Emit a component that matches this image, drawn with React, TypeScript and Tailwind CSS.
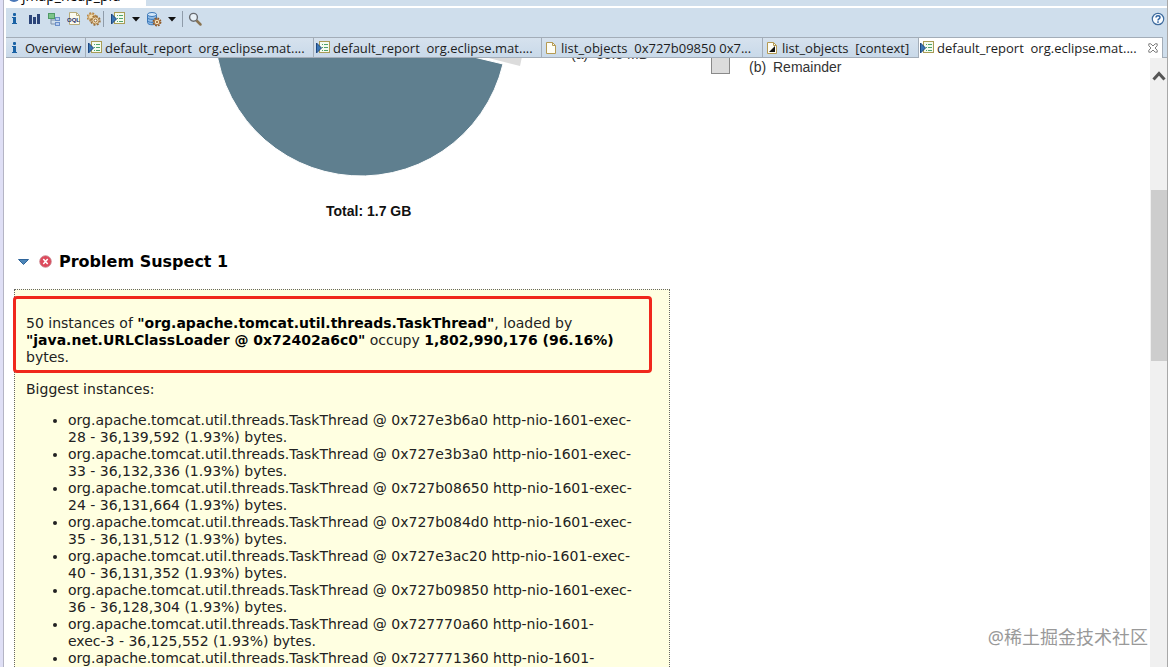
import type { ReactNode } from "react";

function InfoIcon() {
  return (
    <svg width="16" height="16" viewBox="0 0 16 16" fill="#1a62a5">
      <rect x="6" y="2" width="3" height="3" rx="1" />
      <path d="M5 6h4v6h1v1H5v-1h1V7H5z" />
    </svg>
  );
}

function HistogramIcon() {
  return (
    <svg width="16" height="16" viewBox="0 0 16 16" fill="#2b4478">
      <rect x="2" y="4" width="3" height="9" />
      <rect x="6" y="6" width="3" height="7" />
      <rect x="10" y="3" width="3" height="10" />
    </svg>
  );
}

function TreeIcon() {
  return (
    <svg width="16" height="16" viewBox="0 0 16 16">
      <path d="M4 7v6h5M4 9h5" fill="none" stroke="#7d8fa8" />
      <rect x="1.500" y="2.500" width="6" height="5" fill="#7cc48a" stroke="#4f9a66" />
      <rect x="8.500" y="6.500" width="4" height="3" fill="#b8cdf0" stroke="#6a8fc9" />
      <rect x="8.500" y="11.500" width="4" height="3" fill="#b8cdf0" stroke="#6a8fc9" />
    </svg>
  );
}

function OqlIcon() {
  return (
    <svg width="16" height="16" viewBox="0 0 16 16">
      <path d="M2.500 1.500h7l3 3v9h-10z" fill="#fbfaf0" stroke="#b8ac7c" />
      <path d="M9.500 1.500v3h3" fill="none" stroke="#b8ac7c" />
      <text x="0" y="11" fontSize="6" fontWeight="700" fontFamily="Liberation Sans, sans-serif" fill="#27306b">
        OQL
      </text>
    </svg>
  );
}

function GearsIcon() {
  return (
    <svg width="16" height="16" viewBox="2 0 16 16" fill="none">
      <circle cx="6.500" cy="6" r="4" stroke="#b9853f" strokeWidth="1.500" strokeDasharray="2 1.200" />
      <circle cx="6.500" cy="6" r="3" fill="#f2dcae" stroke="#c99a5a" />
      <circle cx="10.500" cy="9.500" r="4.500" stroke="#97703c" strokeWidth="1.500" strokeDasharray="2 1.500" />
      <circle cx="10.500" cy="9.500" r="3.500" fill="#f4e3bd" stroke="#b08045" />
      <circle cx="10.500" cy="9.500" r="1.500" fill="#fff" stroke="#8f6128" />
    </svg>
  );
}

function ReportIcon() {
  return (
    <svg width="16" height="16" viewBox="0 0 16 16">
      <rect x="4.500" y="1.500" width="10" height="11" fill="#f4fbef" stroke="#a99c55" />
      <path d="M7 4.500h1M9 4.500h4M7 7.500h1M9 7.500h4M7 10.500h1M9 10.500h4" stroke="#4ea36c" />
      <path d="M1.500 3l5 5-5 5z" fill="#3a76b4" stroke="#1c4680" />
    </svg>
  );
}

function DatabaseIcon() {
  return (
    <svg width="16" height="16" viewBox="0 0 16 16">
      <path d="M1.500 3.500v8c0 3 9 3 9 0v-8z" fill="#8fbce8" stroke="#3c78b8" />
      <ellipse cx="6" cy="3.500" rx="4.500" ry="2" fill="#d3e7fa" stroke="#3c78b8" />
      <path d="M1.500 6.500c0 2.500 9 2.500 9 0M1.500 9.500c0 2.500 9 2.500 9 0" fill="none" stroke="#3c78b8" />
      <circle cx="11" cy="11" r="3.700" fill="none" stroke="#8f5a28" strokeWidth="1.500" strokeDasharray="1.800 1.100" />
      <circle cx="11" cy="11" r="2.800" fill="#f4e3bd" stroke="#a86a34" />
      <circle cx="11" cy="11" r="1" fill="#8f5a28" />
    </svg>
  );
}

function SearchIcon() {
  return (
    <svg width="16" height="16" viewBox="0 0 16 16">
      <path d="M9.500 9.500l4 4" stroke="#8a7350" strokeWidth="2.500" strokeLinecap="round" />
      <circle cx="6.500" cy="6.300" r="3.900" fill="#e8f1f8" stroke="#686b70" strokeWidth="1.400" />
    </svg>
  );
}

function PageIcon({ marked = false }: { marked?: boolean }) {
  return (
    <svg width="16" height="16" viewBox="0 0 16 16">
      <path d="M3.500 2.500h6l3 3v8h-9z" fill="#fefdf4" stroke="#b59a52" />
      <path d="M9.500 2.500v3h3" fill="none" stroke="#b59a52" />
      {marked && <path d="M5 12l6-6v6z" fill="#111" />}
    </svg>
  );
}

function HelpIcon() {
  return (
    <svg width="14" height="14" viewBox="0 0 14 14">
      <circle cx="7" cy="7" r="5.700" fill="#f8fbfe" stroke="#3f6c9e" strokeWidth="1.200" />
      <path d="M5 5.600c0-2.600 4-2.400 4-.2 0 1.500-2 1.400-2 3" fill="none" stroke="#2e62a0" strokeWidth="1.500" />
      <rect x="6.200" y="9.300" width="1.600" height="1.500" fill="#2e62a0" />
    </svg>
  );
}

function CloseIcon() {
  return (
    <svg width="10" height="10" viewBox="0 0 10 10">
      <path
        d="M.8.8h2L5 3 7.200.8h2v2L7 5l2.200 2.200v2h-2L5 7 2.800 9.200h-2v-2L3 5 .8 2.800z"
        fill="#fff"
        stroke="#6f6f6f"
        strokeWidth="0.900"
      />
    </svg>
  );
}

function ErrorIcon() {
  return (
    <svg width="13" height="13" viewBox="0 0 13 13">
      <circle cx="6.500" cy="6.500" r="5.800" fill="#dd4a5c" stroke="#c8808a" strokeWidth="0.800" />
      <path d="M4.300 4l4.400 5M8.700 4l-4.400 5" stroke="#fff" strokeWidth="1.500" />
    </svg>
  );
}

function ToolButton({ label, children }: { label: string; children: ReactNode }) {
  return (
    <button type="button" aria-label={label} className="flex h-5 w-4 items-center justify-center">
      {children}
    </button>
  );
}

function MenuButton({ label }: { label: string }) {
  return (
    <button type="button" aria-label={label} className="mx-0.5 flex h-5 w-2 items-center justify-center">
      <svg width="8" height="5" viewBox="0 0 8 5">
        <path d="M0 0h8L4 4.500z" fill="#111" />
      </svg>
    </button>
  );
}

function Toolbar() {
  return (
    <div className="flex h-[31px] items-start border-t-2 border-white bg-[#cfdeec] pt-px pr-0.5 pl-px">
      <div className="flex items-center gap-1">
        <ToolButton label="Overview"><InfoIcon /></ToolButton>
        <ToolButton label="Histogram"><HistogramIcon /></ToolButton>
        <ToolButton label="Dominator tree"><TreeIcon /></ToolButton>
        <ToolButton label="Query language"><OqlIcon /></ToolButton>
        <ToolButton label="Thread overview"><GearsIcon /></ToolButton>
        <span className="mr-0.5 -ml-1 h-4 w-px bg-[#8f9caa]" />
        <ToolButton label="Run report"><ReportIcon /></ToolButton>
        <MenuButton label="Report menu" />
        <ToolButton label="Query browser"><DatabaseIcon /></ToolButton>
        <MenuButton label="Query menu" />
        <span className="h-4 w-px bg-[#8f9caa]" />
        <ToolButton label="Find"><SearchIcon /></ToolButton>
      </div>
      <button type="button" aria-label="Help" className="ml-auto flex h-5 items-center">
        <HelpIcon />
      </button>
    </div>
  );
}

const tabs = [
  { label: "Overview", icon: <InfoIcon />, width: "w-[80px]" },
  { label: "default_report  org.eclipse.mat....", icon: <ReportIcon />, width: "w-[228px]" },
  { label: "default_report  org.eclipse.mat....", icon: <ReportIcon />, width: "w-[228px]" },
  { label: "list_objects  0x727b09850 0x7...", icon: <PageIcon />, width: "w-[221px]" },
  { label: "list_objects  [context]", icon: <PageIcon marked />, width: "w-[156px]" },
];

function TabBar() {
  return (
    <div role="tablist" className="flex h-[21px] bg-[#cfdeec] font-['Open_Sans',sans-serif] text-[13px] leading-[18px] text-[#1c1c1c]">
      {tabs.map((tab, i) => (
        <button
          key={i}
          type="button"
          role="tab"
          aria-selected={false}
          className={`flex shrink-0 items-center gap-0.5 border-t border-r border-b border-[#a3adb8] bg-linear-to-b from-[#d6e2ee] to-[#c9d9e9] pl-px whitespace-pre ${tab.width}`}
        >
          {tab.icon}
          {tab.label}
        </button>
      ))}
      <div className="flex min-w-0 grow items-center border-t border-r border-[#a3adb8] bg-white pr-1">
        <button type="button" role="tab" aria-selected className="flex items-center gap-0.5 whitespace-pre">
          <ReportIcon />
          default_report  org.eclipse.mat....
        </button>
        <button type="button" aria-label="Close tab" className="ml-auto">
          <CloseIcon />
        </button>
      </div>
      <div className="w-1 border-b border-[#a3adb8]" />
    </div>
  );
}

function PieChart() {
  return (
    <svg
      width="900"
      height="176"
      viewBox="6 58 900 176"
      className="block"
      fontFamily="Liberation Sans, Arial, sans-serif"
      fontSize="14"
      fill="#333"
    >
      <path d="M379 30L520 66A145 145 0 0 0 524 30Z" fill="#dcdcdc" />
      <path d="M361 30L503 64A146 146 0 1 1 361 -116Z" fill="#5f7f8f" stroke="#fff" strokeWidth="1" />
      <text x="571" y="59" xmlSpace="preserve">(a)  33.3 MB</text>
      <rect x="711.500" y="48.500" width="18" height="25" fill="#dcdcdc" stroke="#8a8a8a" />
      <text x="749" y="72">(b)</text>
      <text x="773" y="72">Remainder</text>
      <text x="326" y="216" fontWeight="700" fill="#111">Total: 1.7 GB</text>
    </svg>
  );
}

// \u2060 keeps single digit thread numbers on the same line as "exec-"
const instances = [
  { address: "0x727e3b6a0", thread: "http-nio-1601-exec-28", bytes: "36,139,592" },
  { address: "0x727e3b3a0", thread: "http-nio-1601-exec-33", bytes: "36,132,336" },
  { address: "0x727b08650", thread: "http-nio-1601-exec-24", bytes: "36,131,664" },
  { address: "0x727b084d0", thread: "http-nio-1601-exec-35", bytes: "36,131,512" },
  { address: "0x727e3ac20", thread: "http-nio-1601-exec-40", bytes: "36,131,352" },
  { address: "0x727b09850", thread: "http-nio-1601-exec-36", bytes: "36,128,304" },
  { address: "0x727770a60", thread: "http-nio-1601-exec-\u20603", bytes: "36,125,552" },
  { address: "0x727771360", thread: "http-nio-1601-exec-\u20608", bytes: "36,124,960" },
];

function ProblemSuspect() {
  return (
    <section className="px-2 font-['DejaVu_Sans',Verdana,sans-serif] text-[#222]">
      <h2 className="flex h-[55px] items-center pl-1 text-base font-bold text-black">
        <button type="button" aria-label="Collapse section" className="mr-2.5">
          <svg width="11" height="6" viewBox="0 0 11 6">
            <path d="M.5.5h10l-5 5z" fill="#4d86b8" stroke="#2f659b" />
          </svg>
        </button>
        <ErrorIcon />
        <span className="ml-[7px]">Problem Suspect 1</span>
      </h2>

      <div className="w-[656px] border border-dotted border-[#666] bg-[#ffffe1] pt-[6px] text-sm leading-[17px]">
        <p className="-ml-0.5 w-[639px] rounded-sm border-3 border-[#f0281c] pt-4 pr-4 pb-1 pl-[10px]">
          50 instances of <b className="text-black">"org.apache.tomcat.util.threads.TaskThread"</b>, loaded by{" "}
          <b className="text-black">"java.net.URLClassLoader @ 0x72402a6c0"</b> occupy{" "}
          <b className="text-black">1,802,990,176 (96.16%)</b> bytes.
        </p>
        <p className="mt-2 pl-[11px]">Biggest instances:</p>
        <ul className="mt-[14px] list-disc pr-8 pl-[53px]">
          {instances.map((item) => (
            <li key={item.address}>
              org.apache.tomcat.util.threads.TaskThread @ {item.address} {item.thread} - {item.bytes} (1.93%) bytes.
            </li>
          ))}
        </ul>
      </div>
    </section>
  );
}

function Scrollbar() {
  return (
    <div className="flex w-[17px] shrink-0 flex-col items-center bg-[#f0f0f0]">
      <button type="button" aria-label="Scroll up" className="flex h-9 items-center">
        <svg width="14" height="10" viewBox="0 0 14 10">
          <path d="M1.500 8.500L7 2.500l5.500 6" fill="none" stroke="#555" strokeWidth="3" />
        </svg>
      </button>
      <div className="mt-24 h-[171px] w-4 bg-[#cdcdcd]" />
    </div>
  );
}

export default function App() {
  return (
    <div className="flex h-screen overflow-hidden bg-white">
      <div className="w-1 shrink-0 border-r border-[#b4b4c4] bg-[#dfdff5]" />
      <div className="ml-0.5 flex min-w-0 grow flex-col border-r border-[#a8a8a8]">
        <div className="flex h-[6px] shrink-0 items-end overflow-hidden bg-[#cfdeec] font-['Open_Sans',sans-serif] text-sm">
          <div className="flex w-[140px] items-center gap-0.5 bg-white pl-0.5">
            <span className="size-3 rounded-full bg-[#4a78b8]" />
            <span>jmap_heap_pid</span>
          </div>
        </div>
        <div className="shrink-0">
          <Toolbar />
          <TabBar />
        </div>
        <div className="flex min-h-0 grow">
          <main className="min-w-0 grow overflow-hidden">
            <PieChart />
            <ProblemSuspect />
          </main>
          <Scrollbar />
        </div>
      </div>
      <div className="absolute right-5 bottom-4 font-['Noto_Sans','Noto_Sans_CJK_SC',sans-serif] text-lg text-[#999]">
        @稀土掘金技术社区
      </div>
    </div>
  );
}
